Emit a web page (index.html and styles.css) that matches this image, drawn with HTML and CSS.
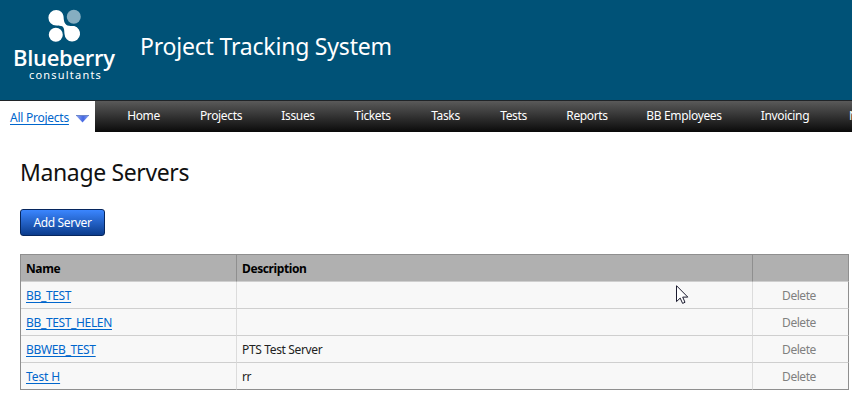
FILE: index.html
```html
<!DOCTYPE html>
<html lang="en">
<head>
<meta charset="utf-8">
<title>Project Tracking System</title>
<link rel="stylesheet" href="styles.css">
</head>
<body>
<header class="banner">
  <div class="logo">
    <svg class="logo-mark" width="34" height="34" viewBox="0 0 34 34" aria-hidden="true">
      <circle cx="25.8" cy="7.8" r="7" fill="#86aec1"/>
      <circle cx="7.8" cy="25.8" r="7" fill="#fff"/>
      <path fill="#fff" d="M8.2 1C12.4 1 15.4 4 15.6 7.9C15.8 12 16.5 16 21 16.7C23 17 25 16.9 26.3 17.1A7.8 7.8 0 1 1 16.5 25C16.2 22 16.6 17.5 13 17.1C11 16.9 9.5 16.6 8.2 16.6A7.8 7.8 0 0 1 8.2 1Z"/>
    </svg>
    <div class="logo-name">Blueberry</div>
    <div class="logo-sub">consultants</div>
  </div>
  <div class="app-title">Project Tracking System</div>
</header>
<nav class="nav">
  <div class="picker">
    <a href="#">All Projects</a>
    <svg width="13" height="8" viewBox="0 0 13 8" aria-hidden="true">
      <defs><linearGradient id="arrow"><stop offset="0" stop-color="#8fa6f2"/><stop offset=".55" stop-color="#4568e2"/><stop offset="1" stop-color="#8fa6f2"/></linearGradient></defs>
      <path d="M0 .5H13L6.5 7.5Z" fill="url(#arrow)"/><path d="M0 .5H13" stroke="#6c86c8"/>
    </svg>
  </div>
  <div class="menu">
    <span>Home</span><span>Projects</span><span>Issues</span><span>Tickets</span><span>Tasks</span><span>Tests</span><span>Reports</span><span>BB Employees</span><span>Invoicing</span><span class="clipped">N</span>
  </div>
</nav>
<main class="content">
  <h1>Manage Servers</h1>
  <button class="add">Add Server</button>
  <table class="servers">
    <colgroup><col class="c-name"><col class="c-desc"><col class="c-action"></colgroup>
    <thead><tr><th>Name</th><th>Description</th><th></th></tr></thead>
    <tbody>
      <tr><td><a href="#">BB_TEST</a></td><td></td><td class="action">Delete</td></tr>
      <tr><td><a href="#">BB_TEST_HELEN</a></td><td></td><td class="action">Delete</td></tr>
      <tr><td><a href="#">BBWEB_TEST</a></td><td>PTS Test Server</td><td class="action">Delete</td></tr>
      <tr><td><a class="loose" href="#">Test H</a></td><td>rr</td><td class="action">Delete</td></tr>
    </tbody>
  </table>
</main>
<svg class="cursor" width="13" height="20" viewBox="0 0 13 20" aria-hidden="true">
  <path d="M.5 .7V16.6L4.2 13.1L6.6 18.4L9 17.3L6.7 12.1H11.8Z" fill="#fff" stroke="#1c1c30"/>
</svg>
</body>
</html>
```
FILE: styles.css
```css
* { box-sizing: border-box; }
body {
  margin: 0;
  width: 852px;
  height: 402px;
  overflow: hidden;
  position: relative;
  background: #fff;
  color: #222;
  font: 12px/16px "Noto Sans", "Open Sans", sans-serif;
  letter-spacing: -0.35px;
}
a { color: #0066cc; text-decoration: underline; text-underline-offset: 2px; text-decoration-thickness: 1px; text-decoration-skip-ink: none; }
.banner { height: 100px; background: #005277; color: #fff; display: flex; }
.logo { width: 130px; padding-top: 9px; }
.logo-mark { display: block; margin-left: 48px; }
.logo-name {
  margin: 2px 0 0 13px;
  font: 600 22px/25px "Open Sans", "Noto Sans", sans-serif;
  letter-spacing: -0.3px;
}
.logo-sub { margin: -1px 0 0 29px; font: 11px/12px "Noto Sans", sans-serif; letter-spacing: 1.2px; }
.app-title { margin: 30px 0 0 10px; font-size: 23px; line-height: 32px; letter-spacing: -0.2px; white-space: nowrap; }
.nav {
  height: 32px;
  display: flex;
  overflow: hidden;
  border-top: 1px solid #202428;
  background: linear-gradient(#5a5a5a, #0a0a0a);
}
.picker { width: 95px; flex: none; background: #fff; padding: 9px 0 0 10px; display: flex; gap: 7px; white-space: nowrap; letter-spacing: -0.25px; }
.picker a { width: 59px; }
.picker svg { flex: none; margin-top: 5px; }
.menu {
  flex: none;
  width: 745px;
  overflow: hidden;
  margin-left: 12px;
  display: grid;
  grid-template-columns: 73px 82px 72px 77px 69px 67px 80px 114px 88px 23px;
  color: #fff;
  padding-top: 7px;
  text-align: center;
  white-space: nowrap;
}
.menu .clipped { text-align: left; padding-left: 20px; overflow: hidden; }
.content { padding: 24px 0 0 20px; }
h1 { margin: 0; font-size: 23px; line-height: 32px; font-weight: 400; letter-spacing: -0.37px; color: #111; }
.add {
  display: block;
  width: 85px;
  height: 27px;
  margin: 21px 0 18px;
  padding: 0;
  border: 1px solid #06265e;
  border-radius: 3px;
  background: linear-gradient(#3b86ff, #0b3c8c);
  color: #fff;
  font: inherit;
  letter-spacing: inherit;
}
.servers {
  width: 829px;
  table-layout: fixed;
  border-collapse: separate;
  border-spacing: 0;
  border-top: 1px solid #8f8f8f;
  border-left: 1px solid #8f8f8f;
}
.c-name { width: 216px; }
.c-desc { width: 516px; }
.c-action { width: 96px; }
th, td {
  height: 27px;
  padding: 2px 5px 0;
  text-align: left;
  border-right: 1px solid #dcdcdc;
  border-bottom: 1px solid #cfcfcf;
  white-space: nowrap;
}
th { background: #b0b0b0; color: #000; border-right-color: #8f8f8f; letter-spacing: -0.4px; }
td { background: #f8f8f8; }
td:last-child { border-right-color: #8f8f8f; }
tr:last-child td { border-bottom-color: #8f8f8f; }
td.action { color: #808080; text-align: center; padding: 2px 7px 0 4px; letter-spacing: -0.45px; }
.loose { letter-spacing: -0.1px; }
.cursor { position: absolute; left: 676px; top: 285px; }
```
